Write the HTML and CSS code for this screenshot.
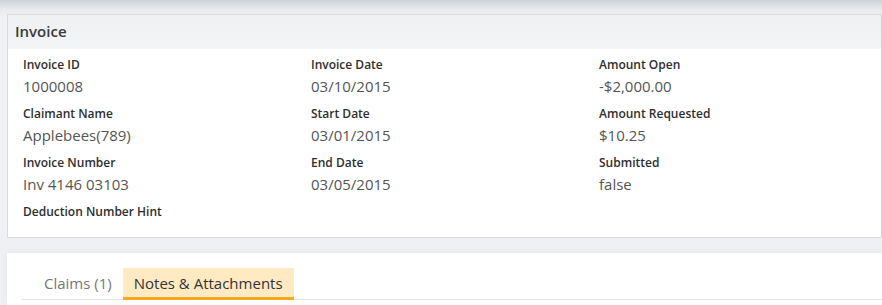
FILE: index.html
```html
<!DOCTYPE html>
<html lang="en">
<head>
    <meta charset="UTF-8">
    <title>Invoice</title>
    <link rel="stylesheet" href="styles.css">
</head>
<body>
    <!-- Invoice details -->
    <div class="panel">
        <div class="panel-title">Invoice</div>
        <div class="fields">
            <div class="field">
                <div class="field-label">Invoice ID</div>
                <div class="field-value">1000008</div>
            </div>
            <div class="field">
                <div class="field-label">Invoice Date</div>
                <div class="field-value">03/10/2015</div>
            </div>
            <div class="field">
                <div class="field-label">Amount Open</div>
                <div class="field-value">-$2,000.00</div>
            </div>
            <div class="field">
                <div class="field-label">Claimant Name</div>
                <div class="field-value">Applebees(789)</div>
            </div>
            <div class="field">
                <div class="field-label">Start Date</div>
                <div class="field-value">03/01/2015</div>
            </div>
            <div class="field">
                <div class="field-label">Amount Requested</div>
                <div class="field-value">$10.25</div>
            </div>
            <div class="field">
                <div class="field-label">Invoice Number</div>
                <div class="field-value">Inv 4146 03103</div>
            </div>
            <div class="field">
                <div class="field-label">End Date</div>
                <div class="field-value">03/05/2015</div>
            </div>
            <div class="field">
                <div class="field-label">Submitted</div>
                <div class="field-value">false</div>
            </div>
            <div class="field">
                <div class="field-label">Deduction Number Hint</div>
                <div class="field-value"></div>
            </div>
        </div>
    </div>

    <!-- Tabs -->
    <div class="tab-panel">
        <div class="tabs">
            <div class="tab">Claims (1)</div>
            <div class="tab active">Notes &amp; Attachments</div>
        </div>
    </div>
</body>
</html>
```

FILE: styles.css
```css
body {
    margin: 0;
    font-family: "Open Sans", Arial, sans-serif;
    color: #333;
    background: linear-gradient(#cdd2d9 0, #e9ebef 10px, #eef0f3 16px) no-repeat, #eef0f3;
    height: 305px;
    overflow: hidden;
}
.panel {
    margin: 14px 0 0 7px;
    background-color: #ffffff;
    border: 1px solid #d9dbde;
    border-right-color: #cfd1d4;
}
.panel-title {
    background: linear-gradient(#eef0f2, #f3f4f6);
    font-size: 15px;
    font-weight: 600;
    line-height: 32px;
    padding: 0 7px 2px;
    color: #3a3a3a;
}
.fields {
    display: grid;
    grid-template-columns: 288px 288px 288px;
    padding: 7px 0 9px 7px;
}
.field {
    padding-left: 8px;
    margin-bottom: 7px;
}
.field-label {
    font-size: 12px;
    font-weight: 600;
    line-height: 18px;
    color: #2e2e2e;
}
.field-value {
    font-size: 15px;
    line-height: 22px;
    margin-top: 1px;
    margin-bottom: 1px;
    color: #555;
}
.field-value:empty {
    display: none;
}
.tab-panel {
    margin: 15px 0 0 7px;
    background-color: #ffffff;
    box-shadow: 0 0 6px rgba(0, 0, 0, 0.05);
    padding: 15px 0 0 15px;
    height: 37px;
}
.tabs {
    display: flex;
    border-bottom: 1px solid #e2e2e2;
    padding-left: 11px;
}
.tab {
    font-size: 15px;
    line-height: 20px;
    padding: 5px 11px 4px;
    border-bottom: 3px solid transparent;
    margin-bottom: -1px;
    color: #777;
}
.tab.active {
    background-color: #ffeac4;
    border-bottom-color: #f7a823;
    color: #333;
}
```
